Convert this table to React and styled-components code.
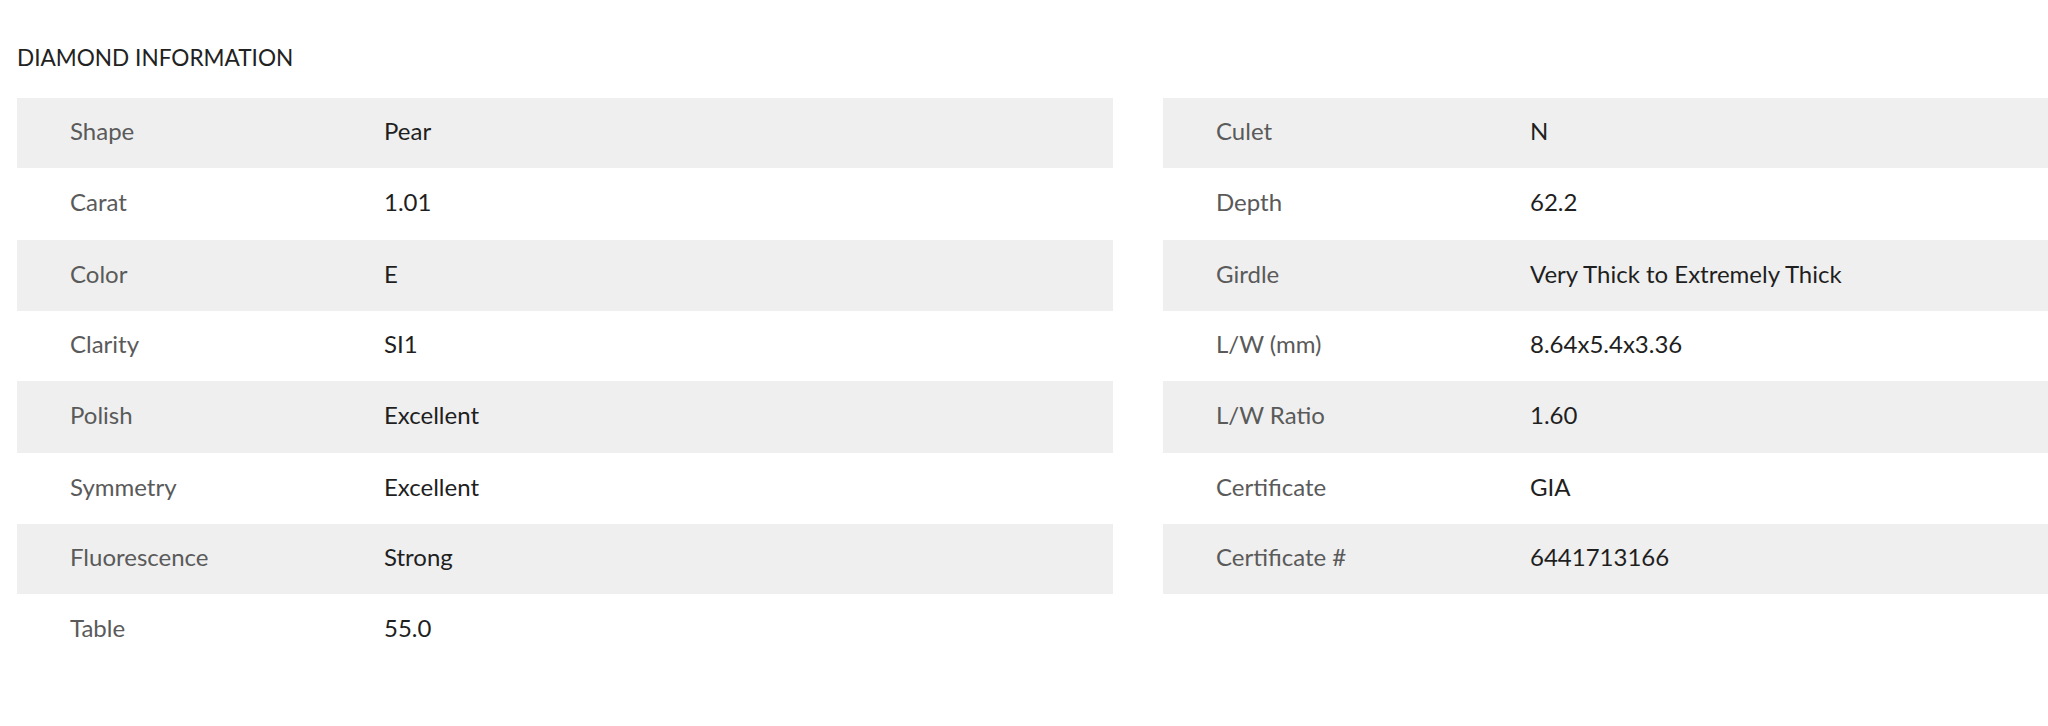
import React from 'react';
import styled, { createGlobalStyle } from 'styled-components';

const GlobalStyle = createGlobalStyle`
  html, body {
    margin: 0;
    padding: 0;
    background: #ffffff;
    overflow: hidden;
  }
  body {
    font-family: 'Lato', 'Noto Sans', sans-serif;
  }
`;

const Section = styled.section`
  padding: 42px 0 0 17px;
`;

const Title = styled.h2`
  margin: 0 0 24px 0;
  font-size: 22.6px;
  font-weight: 400;
  line-height: 32px;
  color: #222222;
`;

const Columns = styled.div`
  display: grid;
  grid-template-columns: 1096px 1fr;
  gap: 50px;
  align-items: start;
`;

const Table = styled.div`
  display: flex;
  flex-direction: column;
`;

const Row = styled.div`
  display: grid;
  grid-template-columns: 314px 1fr;
  align-items: center;
  box-sizing: border-box;
  height: ${(p) => p.$h}px;
  padding: 0 0 5px 53px;
  background: ${(p) => (p.$striped ? '#efefef' : 'transparent')};
`;

const Label = styled.span`
  font-size: 24px;
  color: #5a5a5a;
`;

const Value = styled.span`
  font-size: 24px;
  color: #1f1f1f;
`;

const left = [
  ['Shape', 'Pear'],
  ['Carat', '1.01'],
  ['Color', 'E'],
  ['Clarity', 'SI1'],
  ['Polish', 'Excellent'],
  ['Symmetry', 'Excellent'],
  ['Fluorescence', 'Strong'],
  ['Table', '55.0'],
];

const right = [
  ['Culet', 'N'],
  ['Depth', '62.2'],
  ['Girdle', 'Very Thick to Extremely Thick'],
  ['L/W (mm)', '8.64x5.4x3.36'],
  ['L/W Ratio', '1.60'],
  ['Certificate', 'GIA'],
  ['Certificate #', '6441713166'],
];

const heights = [70, 72, 71, 70, 72, 71, 70, 72];

const InfoTable = ({ rows }) => (
  <Table>
    {rows.map(([label, value], i) => (
      <Row key={label} $striped={i % 2 === 0} $h={heights[i]}>
        <Label>{label}</Label>
        <Value>{value}</Value>
      </Row>
    ))}
  </Table>
);

export default function App() {
  return (
    <>
      <GlobalStyle />
      <Section>
        <Title>DIAMOND INFORMATION</Title>
        <Columns>
          <InfoTable rows={left} />
          <InfoTable rows={right} />
        </Columns>
      </Section>
    </>
  );
}
